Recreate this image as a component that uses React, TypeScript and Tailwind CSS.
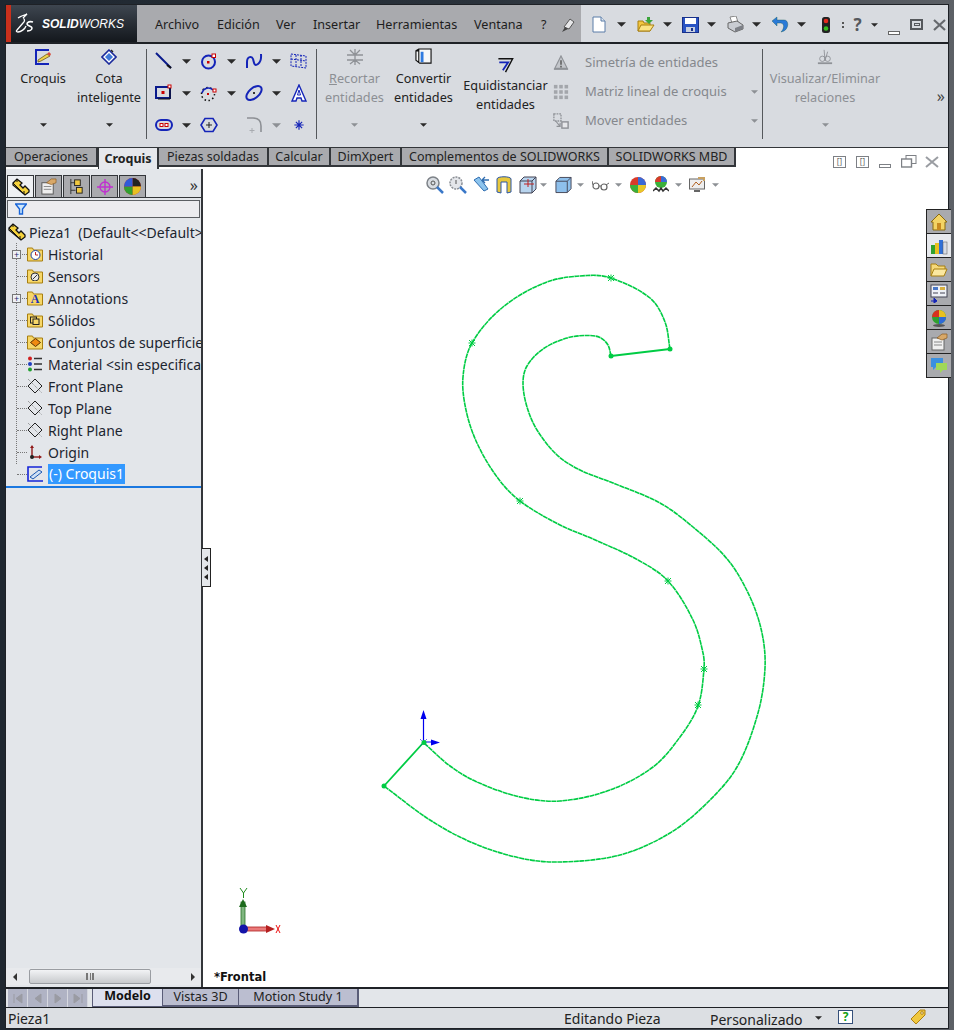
import React from 'react';

type Pt = [number, number];

const GREEN = '#00cc44';

// spline through traced points, handles scaled to each segment so uneven spacing doesn't kink
const smooth = (pts: Pt[]) => {
  const tangent = (i: number): Pt => {
    const a = pts[Math.max(i - 1, 0)];
    const b = pts[Math.min(i + 1, pts.length - 1)];
    const dx = b[0] - a[0];
    const dy = b[1] - a[1];
    const len = Math.hypot(dx, dy) || 1;
    return [dx / len, dy / len];
  };
  let d = `M${pts[0][0]},${pts[0][1]}`;
  for (let i = 0; i < pts.length - 1; i++) {
    const p1 = pts[i];
    const p2 = pts[i + 1];
    const k = Math.hypot(p2[0] - p1[0], p2[1] - p1[1]) / 3;
    const t1 = tangent(i);
    const t2 = tangent(i + 1);
    d += ` C${(p1[0] + t1[0] * k).toFixed(1)},${(p1[1] + t1[1] * k).toFixed(1)} ${(p2[0] - t2[0] * k).toFixed(1)},${(p2[1] - t2[1] * k).toFixed(1)} ${p2[0]},${p2[1]}`;
  }
  return d;
};

const curveOuterTop: Pt[] = [[670, 349], [665, 322], [650, 298], [611, 278], [587, 275.5], [547, 282], [503, 307], [472, 343], [463, 377], [466, 410], [477, 443], [497, 477], [520, 501], [560, 525], [593, 539], [638, 560], [668, 581], [693, 620], [703, 653], [704, 669], [698, 706], [680, 737], [653, 767], [610, 790], [560, 801], [520, 797], [477, 782], [450, 766], [424, 743]];
const curveInnerTop: Pt[] = [[611, 356], [608, 345], [600, 337.5], [587, 335.5], [567, 338], [543, 349], [527, 366], [523, 383], [527, 407], [537, 430], [557, 455], [580, 470], [613, 483], [660, 503], [693, 527], [728, 560], [750, 597], [762, 633], [765, 668], [758, 713], [737, 767], [707, 803], [670, 833], [620, 855], [560, 862], [520, 858], [473, 843], [430, 820], [384, 786]];
const stars: Pt[] = [[611, 278], [472, 343], [520, 501], [668, 581], [704, 669], [698, 705]];

const Caret = ({ dim = false, size = 'big' }: { dim?: boolean; size?: 'big' | 'small' }) => (
  <svg width={size === 'big' ? 9 : 7} height={size === 'big' ? 5 : 4} viewBox="0 0 8 4" className="shrink-0 block">
    <path d="M0 0h8L4 4z" fill={dim ? '#8d9095' : '#2a2a2a'} />
  </svg>
);

const Svg = ({ s = 18, children }: { s?: number; children: React.ReactNode }) => (
  <svg width={s} height={s} viewBox="0 0 18 18" className="shrink-0 block">{children}</svg>
);

// ---------- ribbon icons ----------
const SketchIcon = () => (
  <svg width="18" height="18" viewBox="0 0 18 18">
    <path d="M15 2H2v14h13" fill="none" stroke="#1424b8" strokeWidth="2" />
    <path d="M4 12l9-6 3 2-9 5-3 1z" fill="#f0d24a" stroke="#5a4a10" strokeWidth="0.7" />
    <path d="M13 6l2-2 2 2-1 2z" fill="#d84a3a" />
  </svg>
);
const SmartDim = () => (
  <svg width="16" height="16" viewBox="0 0 16 16">
    <path d="M8 1l7 7-7 7-7-7z" fill="#fff" stroke="#1b2a9c" strokeWidth="1.6" />
    <path d="M4 8l4-4 4 4-4 4z" fill="#3f78d8" />
    <path d="M10 1l2 2" stroke="#222" strokeWidth="1.5" />
  </svg>
);
const LineIcon = () => <Svg><path d="M1 1l15 15" stroke="#0a1a8c" strokeWidth="2" /><path d="M12 13l4 3" stroke="#111" strokeWidth="2" /></Svg>;
const CircleIcon = () => <Svg><circle cx="8.5" cy="10" r="6.5" fill="none" stroke="#1424b8" strokeWidth="2" /><rect x="7" y="9" width="2.5" height="2.5" fill="#c00" /><rect x="12" y="2" width="3.5" height="3.5" fill="#fff" stroke="#c00" /></Svg>;
const SplineIcon = () => <Svg><path d="M2 16V10c0-6 5-6 6-3s1 8 5 5 3-8 3-10" fill="none" stroke="#1424b8" strokeWidth="2" /></Svg>;
const GridIcon = () => <Svg><path d="M1 2l15 2v12L1 14z M1 7l15 2 M6 3v11 M11 3v12" fill="none" stroke="#1424b8" strokeWidth="1" strokeDasharray="2 1" /></Svg>;
const RectIcon = () => <Svg><rect x="1" y="3" width="14" height="11" fill="none" stroke="#0a1a8c" strokeWidth="2" /><rect x="6.5" y="7" width="3" height="3" fill="#c00" /><rect x="13" y="1" width="3" height="3" fill="#fff" stroke="#c00" /><path d="M15 4v11H3" stroke="#111" fill="none" /></Svg>;
const ArcIcon = () => <Svg><circle cx="8" cy="10" r="6.5" fill="none" stroke="#111" strokeWidth="1.5" strokeDasharray="1.5 2.5" /><path d="M2 9a6.5 6.5 0 0 1 11-3" fill="none" stroke="#1424b8" strokeWidth="1.5" /><rect x="13" y="5" width="3" height="3" fill="#fff" stroke="#c00" /><rect x="7" y="9" width="2" height="2" fill="#c00" /></Svg>;
const EllipseIcon = () => <Svg><ellipse cx="9" cy="9" rx="9" ry="5" transform="rotate(-40 9 9)" fill="none" stroke="#1424b8" strokeWidth="2" /><path d="M8 8l2 2M10 8l-2 2" stroke="#333" /></Svg>;
const TextIcon = () => <Svg><path d="M9 1l7 16h-4l-1-3H7l-1 3H2z" fill="#fff" stroke="#1424b8" strokeWidth="1.4" /><path d="M7.5 11L9 6l1.5 5z" fill="none" stroke="#1424b8" /></Svg>;
const SlotIcon = () => <Svg><rect x="1" y="4" width="16" height="10" rx="5" fill="none" stroke="#1424b8" strokeWidth="2" /><rect x="5" y="7.5" width="3" height="3" fill="#fff" stroke="#c00" /><rect x="10" y="7.5" width="3" height="3" fill="#fff" stroke="#c00" /></Svg>;
const PolygonIcon = () => <Svg><path d="M5 2.5h8L17 9l-4 6.5H5L1 9z" fill="none" stroke="#1424b8" strokeWidth="1.6" /><path d="M9 6v6M6 9h6" stroke="#222" /></Svg>;
const FilletIcon = () => <Svg><path d="M2 2h6c5 0 8 3 8 8v6" fill="none" stroke="#8d9095" strokeWidth="1.6" /><path d="M7 12v5M4.5 14.5h5" stroke="#a8abb0" /></Svg>;
const PointIcon = () => <Svg s={14}><path d="M9 3v12M3 9h12M5 5l8 8M13 5l-8 8" stroke="#1424b8" strokeWidth="1.5" /></Svg>;
const TrimIcon = () => (
  <svg width="18" height="18" viewBox="0 0 18 18"><path d="M1 7h16M1 12h16M9 1v16M4 2l5 5 5-5M4 16l5-4 5 4" fill="none" stroke="#8f9297" strokeWidth="1.3" /></svg>
);
const ConvertIcon = () => (
  <svg width="17" height="17" viewBox="0 0 18 18">
    <path d="M1 3l3-2h13v15H5L1 13z M4 1v2 M1 3h3v13" fill="#f6f7f8" stroke="#111" strokeWidth="1.2" />
    <rect x="6" y="4" width="3" height="11" fill="#2f7be0" />
  </svg>
);
const OffsetIcon = () => (
  <svg width="17" height="16" viewBox="0 0 18 18">
    <path d="M1 2h16L9 17" fill="none" stroke="#111" strokeWidth="1.6" />
    <path d="M2 6h10l-6 9" fill="none" stroke="#1424b8" strokeWidth="2" />
  </svg>
);
const MirrorIcon = () => <Svg s={16}><path d="M9 1l7 14H2z" fill="#c3c6cb" stroke="#8f9297" strokeWidth="1.3" /><path d="M9 6v5M9 12v2" stroke="#555" strokeWidth="1.6" /><path d="M1 16h16" stroke="#8f9297" strokeWidth="1.5" /></Svg>;
const PatternIcon = () => (
  <Svg s={16}>
    {[1, 7, 13].flatMap((x) => [1, 7, 13].map((y) => <rect key={`${x}-${y}`} x={x} y={y} width="4" height="4" fill="#a3a6ab" />))}
  </Svg>
);
const MoveIcon = () => <Svg s={16}><path d="M1 1h8v8H1z" fill="none" stroke="#8f9297" strokeWidth="1.5" strokeDasharray="2 1" /><rect x="10" y="10" width="7" height="7" fill="#e6e7ea" stroke="#8f9297" strokeWidth="1.6" /><path d="M3 9l5 6M8 11v4H4" fill="none" stroke="#8f9297" strokeWidth="1.3" /></Svg>;
const RelationIcon = () => <Svg s={16}><path d="M1 16h16" stroke="#8f9297" strokeWidth="2" /><circle cx="6" cy="11" r="3" fill="none" stroke="#8f9297" /><circle cx="12" cy="11" r="3" fill="none" stroke="#8f9297" /><path d="M8 1l1 12M12 3l-3 10" stroke="#8f9297" /></Svg>;

// ---------- quick access ----------
const NewIcon = () => <svg width="14" height="17" viewBox="0 0 14 17" className="block"><path d="M1 1h8l4 4v11H1z" fill="#fff" stroke="#5a7da8" /><path d="M9 1v4h4" fill="#dfe7f0" stroke="#5a7da8" /></svg>;
const OpenIcon = () => <svg width="18" height="17" viewBox="0 0 18 17" className="block"><path d="M1 15V5h5l1 2h6v8z" fill="#f3c63f" stroke="#a77f10" /><path d="M1 15l3-6h13l-4 6z" fill="#fbe383" stroke="#a77f10" /><path d="M10 1h3v3h3l-4 4-4-4h2z" fill="#3ca53c" /></svg>;
const SaveIcon = () => <svg width="17" height="16" viewBox="0 0 17 16" className="block"><rect x="0.5" y="0.5" width="16" height="15" fill="#2a54c4" stroke="#18308a" /><rect x="3" y="1" width="11" height="6" fill="#fff" /><rect x="4" y="10" width="9" height="5" fill="#c8d0e0" /><rect x="9" y="11" width="2" height="3" fill="#18308a" /></svg>;
const PrintIcon = () => <svg width="17" height="17" viewBox="0 0 17 17" className="block"><path d="M3 1l6-1 2 6-6 1z" fill="#fff" stroke="#888" /><path d="M1 7l9-2 6 4v4l-8 3-7-4z" fill="#c9ccd2" stroke="#666" /><path d="M8 12l8-3v4l-8 3z" fill="#7d8087" /></svg>;
const UndoIcon = () => <svg width="18" height="17" viewBox="0 0 18 17" className="block"><path d="M5 4h7c5 0 5 8 0 11l-3 1c3-3 4-8 0-9H5v3L0 5l5-4z" fill="#2a7ad8" stroke="#155" strokeWidth="0.4" /></svg>;
const LightIcon = () => <svg width="8" height="16" viewBox="0 0 8 16" className="block"><rect width="8" height="16" rx="2.5" fill="#222" /><circle cx="4" cy="4" r="2.3" fill="#e42a1c" /><circle cx="4" cy="11.5" r="2.3" fill="#38c020" /></svg>;

// ---------- tree icons ----------
const PartIcon = ({ s = 18 }: { s?: number }) => (
  <svg width={s} height={s} viewBox="0 0 18 18" className="shrink-0">
    <path d="M1 5l4-4 5 4-2 2 3 3 2-2 4 4v2l-4 3L1 7z" fill="#f5d23c" stroke="#111" strokeWidth="1.3" />
    <path d="M1 5l11 11M5 1v3M12 16v-3" fill="none" stroke="#111" strokeWidth="1" />
  </svg>
);
const Folder = ({ children }: { children?: React.ReactNode }) => (
  <span className="relative w-[16px] h-[16px] inline-block shrink-0">
    <svg width="16" height="16" viewBox="0 0 16 16" className="absolute inset-0"><path d="M0.5 15V2h5l1 2h9v11z" fill="#f7d768" stroke="#a77f10" /></svg>
    <span className="absolute inset-0 flex items-center justify-center">{children}</span>
  </span>
);
const PlaneIcon = () => <svg width="16" height="16" viewBox="0 0 16 16"><path d="M8 1l7 7-7 7-7-7z" fill="none" stroke="#222" /><path d="M1 1l14 14" stroke="#666" strokeWidth="0.8" strokeDasharray="1 1" /></svg>;
const MaterialIcon = () => <svg width="16" height="16" viewBox="0 0 16 16"><circle cx="3" cy="2.5" r="2" fill="#d02020" /><circle cx="3" cy="8" r="2" fill="#2040c0" /><circle cx="3" cy="13.5" r="2" fill="#20a030" /><path d="M7 2.5h8M7 8h8M7 13.5h8" stroke="#333" strokeWidth="1.6" /></svg>;
const OriginIcon = () => <svg width="16" height="16" viewBox="0 0 16 16"><path d="M5 13V3" stroke="#901818" strokeWidth="1.4" /><path d="M3 4l2-3 2 3z" fill="#901818" /><path d="M5 13h8" stroke="#901818" strokeWidth="1.4" /><path d="M12 11l3 2-3 2z" fill="#901818" /><circle cx="5" cy="13" r="2" fill="#222" /></svg>;
const SketchTreeIcon = () => <svg width="17" height="16" viewBox="0 0 17 16"><path d="M15 1H1v14h15" fill="none" stroke="#1424d8" strokeWidth="1.6" /><path d="M3 11l9-7 3 2-9 7z" fill="#cfe0f5" stroke="#1c58b0" /></svg>;

const rows: { label: string; plus?: boolean; icon: React.ReactNode }[] = [
  { label: 'Historial', plus: true, icon: <Folder><svg width="11" height="11" viewBox="0 0 11 11"><circle cx="5.5" cy="6" r="4.5" fill="#fff" stroke="#2040a0" /><path d="M5.5 3v3H8" stroke="#c02020" fill="none" /></svg></Folder> },
  { label: 'Sensors', icon: <Folder><svg width="10" height="10" viewBox="0 0 10 10"><circle cx="5" cy="6" r="4" fill="#e8e8e8" stroke="#333" /><path d="M3 8l4-4" stroke="#333" /></svg></Folder> },
  { label: 'Annotations', plus: true, icon: <Folder><span className="font-['Liberation_Serif',serif] text-[12px] font-bold leading-none text-[#1c30b8] pt-[2px]">A</span></Folder> },
  { label: 'Sólidos', icon: <Folder><svg width="10" height="10" viewBox="0 0 10 10"><rect x="0.5" y="2" width="6" height="6" fill="none" stroke="#222" /><rect x="3" y="4" width="6" height="5.5" fill="#f7d768" stroke="#222" /></svg></Folder> },
  { label: 'Conjuntos de superficies', icon: <Folder><svg width="11" height="9" viewBox="0 0 11 9"><path d="M5.5 0.5l5 4-5 4-5-4z" fill="#f08a10" stroke="#5a3000" /></svg></Folder> },
  { label: 'Material <sin especificar>', icon: <MaterialIcon /> },
  { label: 'Front Plane', icon: <PlaneIcon /> },
  { label: 'Top Plane', icon: <PlaneIcon /> },
  { label: 'Right Plane', icon: <PlaneIcon /> },
  { label: 'Origin', icon: <OriginIcon /> },
];

const BigTool = ({ w, icon, lines, dim, caret = true, pt = 'pt-[4px]', iconH = 'h-[17px]', capUnderline }: { w: string; icon: React.ReactNode; lines: string[]; dim?: boolean; caret?: boolean; pt?: string; iconH?: string; capUnderline?: boolean }) => (
  <div className={`${w} ${pt} shrink-0 flex flex-col items-center h-full`}>
    <div className={`${iconH} flex items-center justify-center`}>{icon}</div>
    <div className={`mt-[4px] text-center text-[12.7px] leading-[19px] whitespace-nowrap ${dim ? 'text-[#8c8f94]' : 'text-[#222]'}`}>
      {lines.map((l, i) => (
        <div key={l}>{capUnderline && i === 0 ? <><span className="underline">{l[0]}</span>{l.slice(1)}</> : l}</div>
      ))}
    </div>
    {caret && <div className="mt-auto mb-[20px]"><Caret dim={dim} size="small" /></div>}
  </div>
);

const Sep = () => <div className="w-px h-[90px] bg-[#55585c] shrink-0 self-center -mt-[3px]" />;

const SmallTool = ({ icon, caret, dim }: { icon: React.ReactNode; caret?: boolean; dim?: boolean }) => (
  <div className="h-[32px] flex items-center">
    <span className="w-[24px] flex justify-center">{icon}</span>
    {caret && <span className="ml-[6px]"><Caret dim={dim} /></span>}
  </div>
);

const SideTool = ({ icon, label, caret }: { icon: React.ReactNode; label: string; caret?: boolean }) => (
  <div className="h-[29px] flex items-center text-[#85888d] whitespace-nowrap">
    <span className="w-[16px] flex justify-center mr-[16px]">{icon}</span>
    <span className="flex-1">{label}</span>
    {caret && <Caret dim size="small" />}
  </div>
);

const Tab = ({ w, label, active }: { w: string; label: string; active?: boolean }) => (
  <div className={`${w} shrink-0 flex items-center justify-center whitespace-nowrap border-r-2 border-[#33363a] text-[#222] text-[12.5px] pt-[1px] ${active ? 'bg-[#e6e8ec] font-bold h-[21px] border-l border-b-0' : 'bg-[#a9aaae] h-[19px] border-b-2'}`}>
    {label}
  </div>
);

const PanelTab = ({ active, children }: { active?: boolean; children: React.ReactNode }) => (
  <div className={`w-[27px] h-[22px] flex items-center justify-center border border-[#33363a] border-b-0 ${active ? 'bg-[#eef0f3]' : 'bg-[#a9aaae]'}`}>{children}</div>
);

const TaskBtn = ({ active, children }: { active?: boolean; children: React.ReactNode }) => (
  <div className={`w-[24px] h-[24px] flex items-center justify-center border-b border-[#222] ${active ? 'bg-[#e6e8ec]' : 'bg-[#a9aaae]'}`}>{children}</div>
);

const Viewport = () => (
  <div className="relative flex-1 bg-white">
    {/* heads-up toolbar */}
    <div className="absolute left-[223px] top-[7px] flex items-center h-[17px]">
      <svg width="18" height="18" viewBox="0 0 18 18"><circle cx="7" cy="7" r="6" fill="#d9dde2" stroke="#7d8288" strokeWidth="1.5" /><circle cx="7" cy="7" r="2" fill="none" stroke="#555" /><path d="M11 11l6 6" stroke="#3a78c8" strokeWidth="2.5" /></svg>
      <svg className="ml-[5px]" width="18" height="18" viewBox="0 0 18 18"><circle cx="7" cy="7" r="6" fill="#e4e6ea" stroke="#8a8e94" strokeWidth="1.5" strokeDasharray="2 1" /><path d="M7 4v4" stroke="#555" /><path d="M11 11l6 6" stroke="#3a78c8" strokeWidth="2.5" /></svg>
      <svg className="ml-[5px]" width="18" height="18" viewBox="0 0 18 18"><path d="M2 4l10 11 4-2-9-12z" fill="#8cc4ee" stroke="#2f6db0" /><path d="M10 4h7M10 4l3-3M10 4l3 3" stroke="#2f6db0" fill="none" strokeWidth="1.3" /></svg>
      <svg className="ml-[6px]" width="16" height="18" viewBox="0 0 16 18"><path d="M1 3c0-3 14-3 14 0v13l-4 1V6H5v11l-4-1z" fill="#e8c83c" stroke="#2a56a8" /></svg>
      <svg className="ml-[7px]" width="18" height="18" viewBox="0 0 18 18"><path d="M1 5l4-4h12v12l-4 4H1z" fill="#b8d4ee" stroke="#445" /><path d="M1 5h12v12M13 5l4-4" fill="none" stroke="#445" /><path d="M9 3v8M5 8h10" stroke="#c02020" /></svg>
      <span className="ml-[3px]"><Caret dim size="small" /></span>
      <svg className="ml-[8px]" width="17" height="18" viewBox="0 0 18 18"><path d="M1 5l4-4h12v12l-4 4H1z" fill="#8ec0ec" stroke="#445" /><path d="M1 5h12v12M13 5l4-4" fill="none" stroke="#445" /></svg>
      <span className="ml-[5px]"><Caret dim size="small" /></span>
      <svg className="ml-[8px]" width="17" height="12" viewBox="0 0 17 12"><circle cx="4" cy="7" r="3" fill="none" stroke="#666" strokeWidth="1.2" /><circle cx="12" cy="8" r="3" fill="none" stroke="#666" strokeWidth="1.2" /><path d="M7 7l2 0M1 6L0 2M14 6l3-2" stroke="#666" /></svg>
      <span className="ml-[6px]"><Caret dim size="small" /></span>
      <svg className="ml-[8px]" width="16" height="16" viewBox="0 0 16 16"><circle cx="8" cy="8" r="8" fill="#d83a2a" /><path d="M8 8V0a8 8 0 0 1 8 8z" fill="#3a6ad8" /><path d="M8 8h8a8 8 0 0 1-8 8z" fill="#e8c828" /><path d="M8 8v8a8 8 0 0 1-8-8z" fill="#3ab03a" /></svg>
      <svg className="ml-[7px]" width="16" height="17" viewBox="0 0 16 17"><circle cx="8" cy="6" r="6" fill="#3ab03a" /><path d="M8 6V0a6 6 0 0 1 6 6z" fill="#3a6ad8" /><path d="M8 6H2a6 6 0 0 1 6-6z" fill="#d83a2a" /><path d="M0 15l3-3 3 3 2-3 2 3 3-3 3 3" stroke="#333" strokeWidth="1.5" fill="none" /></svg>
      <span className="ml-[6px]"><Caret dim size="small" /></span>
      <svg className="ml-[7px]" width="16" height="16" viewBox="0 0 16 16"><rect x="0.5" y="2" width="15" height="10" fill="#eee" stroke="#666" /><path d="M3 10l4-5 3 3 3-4" stroke="#b06020" fill="none" /><path d="M5 14h6" stroke="#666" strokeWidth="2" /><path d="M9 1h6v3" stroke="#c8a060" strokeWidth="2" fill="none" /></svg>
      <span className="ml-[7px]"><Caret dim size="small" /></span>
    </div>

    {/* the sketch; viewBox keeps screen coordinates */}
    <svg className="absolute inset-0 w-full h-full" viewBox="204 169 743 818">
      <g fill="none" stroke={GREEN} strokeWidth="1.6" strokeDasharray="5 0.5">
        <path d={smooth(curveOuterTop)} />
        <path d={smooth(curveInnerTop)} />
      </g>
      <path d="M611,356L670,349M384,786L424,742" stroke={GREEN} strokeWidth="1.8" />
      <circle cx="611" cy="356" r="2.5" fill={GREEN} />
      <circle cx="670" cy="349" r="2.5" fill={GREEN} />
      <circle cx="384" cy="786" r="2.5" fill={GREEN} />
      {stars.map(([x, y]) => (
        <path key={`${x}-${y}`} d={`M${x - 3.5},${y}h7M${x},${y - 3.5}v7M${x - 3},${y - 3}l6,6M${x + 3},${y - 3}l-6,6`} stroke={GREEN} strokeWidth="1" />
      ))}
      <path d="M423.5,742V718M424,742h8" stroke="#0000ee" strokeWidth="1.2" />
      <path d="M423.5,710l3,9h-6zM440,742.5l-9,-3v6z" fill="#0000ee" />
      <path d="M420,739l7,7M427,739l-7,7" stroke="#0000ee" strokeWidth="0.8" strokeDasharray="1 1" />
      <circle cx="424" cy="742.5" r="2.5" fill={GREEN} />
      {/* triad */}
      <rect x="241" y="902" width="4" height="27" fill="#7fb67f" stroke="#2a702a" strokeWidth="0.8" />
      <path d="M243,899l4,8h-8z" fill="#1d6b1d" />
      <rect x="244" y="927" width="23" height="4" fill="#ea7a7a" stroke="#b02020" strokeWidth="0.8" />
      <path d="M275,929l-9,-4v8z" fill="#b52020" />
      <circle cx="243.5" cy="929" r="4.5" fill="#1414a8" />
      <path d="M240,888l3.5,5l3.5,-5M243.5,893v5" stroke="#1d8b1d" fill="none" />
      <path d="M276,925l4,8M280,925l-4,8" stroke="#ee1010" fill="none" />
    </svg>

    <div className="absolute left-[11px] bottom-[2px] text-[11.5px] leading-[16px] font-bold text-[#111] font-['DejaVu_Sans',sans-serif]">*Frontal</div>

    {/* task pane */}
    <div className="absolute right-0 top-[40px] border-l border-t border-[#222] translate-x-[3px]">
      <TaskBtn><svg width="18" height="18" viewBox="0 0 18 18"><path d="M1 9l8-8 8 8h-2v8H3V9z" fill="#f3d465" stroke="#8a6a10" /><rect x="7" y="10" width="4" height="7" fill="#c88a20" /></svg></TaskBtn>
      <TaskBtn active><svg width="18" height="18" viewBox="0 0 18 18"><rect x="1" y="8" width="4" height="9" fill="#30a030" /><rect x="5" y="6" width="4" height="11" fill="#e8c020" /><rect x="9" y="3" width="4" height="14" fill="#3070d8" /><rect x="13" y="5" width="4" height="12" fill="#d8dce4" stroke="#555" strokeWidth="0.5" /></svg></TaskBtn>
      <TaskBtn><svg width="18" height="16" viewBox="0 0 18 16"><path d="M1 14V2h5l2 2h7v3" fill="#f5d97a" stroke="#a77f10" /><path d="M1 14l3-7h13l-3 7z" fill="#fbe8a0" stroke="#a77f10" /></svg></TaskBtn>
      <TaskBtn><svg width="18" height="19" viewBox="0 0 18 19"><rect x="1" y="1" width="16" height="12" fill="#eef1f6" stroke="#445" /><rect x="3" y="3" width="5" height="3" fill="#4a78c8" /><rect x="10" y="3" width="5" height="3" fill="#d8b040" /><path d="M3 9h5M10 9h5" stroke="#445" /><path d="M1 17h5M4 14l3 3-3 2z" stroke="#1424b8" fill="#1424b8" /></svg></TaskBtn>
      <TaskBtn><svg width="18" height="18" viewBox="0 0 18 18"><circle cx="9" cy="8" r="7" fill="#30a030" /><path d="M9 8V1a7 7 0 0 1 7 7z" fill="#e8c020" /><path d="M9 8H2a7 7 0 0 1 7-7z" fill="#d83020" /><path d="M9 8h7a7 7 0 0 1-7 7z" fill="#2f6ad8" /><ellipse cx="9" cy="16.5" rx="6" ry="1.5" fill="#555" /></svg></TaskBtn>
      <TaskBtn><svg width="18" height="18" viewBox="0 0 18 18"><rect x="2" y="5" width="12" height="12" fill="#f0f0f0" stroke="#666" /><path d="M4 9h8M4 12h8" stroke="#888" /><path d="M7 5l5-4h5v4l-5 2z" fill="#d8a868" stroke="#8a5a20" strokeWidth="0.7" /></svg></TaskBtn>
      <TaskBtn><svg width="18" height="17" viewBox="0 0 18 17"><rect x="1" y="1" width="12" height="9" fill="#3a90e0" /><path d="M3 10v3l3-3" fill="#3a90e0" /><rect x="6" y="6" width="11" height="7" fill="#a0d858" /><path d="M10 13v3l3-3" fill="#a0d858" /></svg></TaskBtn>
    </div>
  </div>
);

const App: React.FC = () => {
  return (
    <div className="w-[954px] h-[1030px] overflow-hidden bg-gradient-to-r from-[#1f2730] via-[#2a323b] to-[#5c6066] pt-[4px] px-[5px] pb-[1px] font-['Noto_Sans',sans-serif] text-[13px] text-[#222]">
      <div className="h-full flex flex-col border border-[#1e2126] bg-[#d8dbe0]">
        {/* title row */}
        <div className="h-[39px] flex border-b-2 border-[#1e2126] shrink-0">
          <div className="w-[131px] shrink-0 flex items-center bg-gradient-to-b from-[#3e4650] to-[#14181d]">
            <div className="w-[5px] h-full bg-[#c8301c]" />
            <svg className="ml-[4px]" width="20" height="21" viewBox="0 0 20 21">
              <path d="M3 5c3-2 6-3 9-4-2 2-3 3-4 4M8 5c2 1 2 3 0 5l-6 7c-1 1-1 2 1 2 3 0 7-3 8-6" fill="none" stroke="#fff" strokeWidth="1.3" />
              <path d="M18 9c-3-1-6 0-6 2s5 2 5 4-3 3-5 3" fill="none" stroke="#fff" strokeWidth="1.6" />
            </svg>
            <span className="ml-[7px] font-['Liberation_Sans',sans-serif] text-white text-[12px] font-bold italic whitespace-nowrap">SOLID<span className="font-normal">WORKS</span></span>
          </div>
          <div className="w-[444px] shrink-0 bg-[#a9aaae] flex items-center pt-[3px] text-[#1d1d1d] text-[12.6px] whitespace-nowrap">
            <span className="ml-[18px] w-[62px]">Archivo</span>
            <span className="w-[59px]">Edición</span>
            <span className="w-[37px]">Ver</span>
            <span className="w-[63px]">Insertar</span>
            <span className="w-[98px]">Herramientas</span>
            <span className="w-[67px]">Ventana</span>
            <span className="w-[20px]">?</span>
            <svg width="14" height="15" viewBox="0 0 14 15"><path d="M3 9l6-8 4 3-5 7z" fill="#e8e8ea" stroke="#555" /><path d="M1 14l3-5 3 2z" fill="#444" /></svg>
          </div>
          <div className="flex-1 flex items-center pt-[2px] bg-[#d8dbe0]">
            <span className="ml-[11px]"><NewIcon /></span>
            <span className="ml-[11px]"><Caret /></span>
            <span className="ml-[11px]"><OpenIcon /></span>
            <span className="ml-[8px]"><Caret /></span>
            <span className="ml-[10px]"><SaveIcon /></span>
            <span className="ml-[8px]"><Caret /></span>
            <span className="ml-[11px]"><PrintIcon /></span>
            <span className="ml-[8px]"><Caret /></span>
            <span className="ml-[11px]"><UndoIcon /></span>
            <span className="ml-[7px]"><Caret /></span>
            <span className="ml-[16px]"><LightIcon /></span>
            <span className="ml-[12px] w-[3px] h-[6px] border-l-2 border-dotted border-[#555]" />
            <span className="ml-[7px] w-[11px] text-[17px] leading-none font-bold text-[#55585d] text-center">?</span>
            <span className="ml-[8px]"><Caret size="small" /></span>
            <span className="ml-[10px] self-end mb-[7px] w-[12px] h-[4px] border border-[#666] bg-white" />
            <span className="ml-[10px] w-[13px] h-[11px] border-2 border-[#55585c] flex items-center justify-center"><span className="w-[6px] h-[3px] border border-[#55585c]" /></span>
            <svg className="ml-[10px]" width="13" height="12" viewBox="0 0 13 12"><path d="M1 1l11 10M12 1L1 11" stroke="#65686d" strokeWidth="2.2" /></svg>
          </div>
        </div>

        {/* ribbon */}
        <div className="h-[104px] flex shrink-0 border-b border-[#33363a] pl-[4px]">
          <BigTool w="w-[66px]" icon={<SketchIcon />} lines={['Croquis']} />
          <BigTool w="w-[66px]" icon={<SmartDim />} lines={['Cota', 'inteligente']} />
          <div className="w-[4px] shrink-0" />
          <Sep />
          <div className="w-[169px] pl-[5px] pr-[5px] pt-[1px] grid grid-cols-[45px_45px_45px_24px] content-start shrink-0">
            <SmallTool icon={<LineIcon />} caret />
            <SmallTool icon={<CircleIcon />} caret />
            <SmallTool icon={<SplineIcon />} caret />
            <SmallTool icon={<GridIcon />} />
            <SmallTool icon={<RectIcon />} caret />
            <SmallTool icon={<ArcIcon />} caret />
            <SmallTool icon={<EllipseIcon />} caret />
            <SmallTool icon={<TextIcon />} />
            <SmallTool icon={<SlotIcon />} caret />
            <SmallTool icon={<PolygonIcon />} />
            <SmallTool icon={<FilletIcon />} caret dim />
            <SmallTool icon={<PointIcon />} />
          </div>
          <Sep />
          <div className="w-[3px] shrink-0" />
          <BigTool w="w-[69px]" icon={<TrimIcon />} lines={['Recortar', 'entidades']} dim capUnderline />
          <BigTool w="w-[69px]" icon={<ConvertIcon />} lines={['Convertir', 'entidades']} />
          <BigTool w="w-[95px]" icon={<OffsetIcon />} lines={['Equidistanciar', 'entidades']} caret={false} pt="pt-[13px]" iconH="h-[15px]" />
          <div className="w-[209px] pt-[4px] shrink-0 pr-[4px]">
            <SideTool icon={<MirrorIcon />} label="Simetría de entidades" />
            <SideTool icon={<PatternIcon />} label="Matriz lineal de croquis" caret />
            <SideTool icon={<MoveIcon />} label="Mover entidades" caret />
          </div>
          <Sep />
          <BigTool w="w-[124px]" icon={<RelationIcon />} lines={['Visualizar/Eliminar', 'relaciones']} dim />
          <div className="flex-1 flex items-center justify-end pr-[3px] pt-[1px] text-[#444] text-[16px]">»</div>
        </div>

        {/* command tabs */}
        <div className="h-[21px] flex bg-white shrink-0 items-start">
          <Tab w="w-[92px]" label="Operaciones" />
          <Tab w="w-[61px]" label="Croquis" active />
          <Tab w="w-[110px]" label="Piezas soldadas" />
          <Tab w="w-[62px]" label="Calcular" />
          <Tab w="w-[71px]" label="DimXpert" />
          <Tab w="w-[207px]" label="Complementos de SOLIDWORKS" />
          <Tab w="w-[127px]" label="SOLIDWORKS MBD" />
          <div className="flex-1 flex items-center h-full pt-[6px] pl-[97px]">
            <span className="w-[13px] h-[12px] border border-[#7d8085] flex items-center justify-center text-[8px] leading-none text-[#666]">[]</span>
            <span className="ml-[10px] w-[13px] h-[12px] border border-[#7d8085] flex items-center justify-center text-[8px] leading-none text-[#666]">[]</span>
            <span className="ml-[10px] self-end mb-[1px] w-[12px] h-[4px] border border-[#7d8085]" />
            <svg className="ml-[10px]" width="16" height="13" viewBox="0 0 16 13"><rect x="5" y="0.5" width="10" height="8" fill="#fff" stroke="#7d8085" /><rect x="0.5" y="4" width="10" height="8" fill="#fff" stroke="#7d8085" strokeWidth="1.4" /></svg>
            <svg className="ml-[8px]" width="14" height="12" viewBox="0 0 14 12"><path d="M1 1l12 10M13 1L1 11" stroke="#9a9da2" strokeWidth="2" /></svg>
          </div>
        </div>

        {/* body */}
        <div className="flex-1 flex min-h-0 bg-white">
          <div className="relative z-10 w-[197px] shrink-0 flex flex-col bg-[#e3e6ea] border-r-2 border-[#33363a]">
            <div className="h-[29px] flex items-end gap-[1px] pl-[1px] bg-[#e3e6ea] border-b border-[#33363a] shrink-0">
              <PanelTab active><PartIcon /></PanelTab>
              <PanelTab><svg width="17" height="17" viewBox="0 0 18 18"><rect x="2" y="5" width="12" height="12" fill="#eee" stroke="#555" /><path d="M4 9h8M4 12h8" stroke="#888" /><path d="M7 5l5-4h5v4l-5 2z" fill="#d8a868" stroke="#8a5a20" strokeWidth="0.7" /></svg></PanelTab>
              <PanelTab><svg width="17" height="17" viewBox="0 0 18 18"><path d="M3 1v16M3 5h5M3 13h5" stroke="#333" fill="none" /><rect x="7" y="2" width="6" height="6" fill="#f0c840" stroke="#222" /><rect x="9" y="10" width="6" height="6" fill="#f0c840" stroke="#222" /></svg></PanelTab>
              <PanelTab><svg width="16" height="16" viewBox="0 0 16 16"><circle cx="8" cy="8" r="5" fill="none" stroke="#c030d0" strokeWidth="1.4" /><path d="M8 0v16M0 8h16" stroke="#c030d0" strokeWidth="1.4" /></svg></PanelTab>
              <PanelTab><svg width="17" height="17" viewBox="0 0 16 16"><circle cx="8" cy="8" r="8" fill="#d83020" /><path d="M8 8V0a8 8 0 0 1 8 8z" fill="#222" /><path d="M8 8h8a8 8 0 0 1-8 8z" fill="#e8c020" /><path d="M8 8v8a8 8 0 0 1-8-8z" fill="#30a030" /><path d="M8 8H0a8 8 0 0 1 8-8z" fill="#2f5ad8" /></svg></PanelTab>
              <div className="flex-1 self-center text-right pr-[3px] text-[16px] leading-none text-[#333] pt-[3px]">»</div>
            </div>
            <div className="mx-[1px] mt-[2px] h-[18px] bg-[#ececef] border border-[#5c5f63] flex items-center pl-[7px] shrink-0">
              <svg width="12" height="12" viewBox="0 0 12 12"><path d="M0.5 1h11L7.5 6v5h-3V6z" fill="#cfe7fb" stroke="#1864d8" strokeWidth="1.4" /></svg>
            </div>

            <div className="relative mt-[3px] overflow-hidden whitespace-nowrap text-[14px] text-[#1c2530]">
              <div className="h-[22px] flex items-center pl-[2px] gap-[3px]"><PartIcon /><span>Pieza1<span className="ml-[7px]">(Default&lt;&lt;Default&gt;_Estado de visualización 1&gt;)</span></span></div>
              <div className="absolute left-[10px] top-[22px] h-[221px] border-l border-dotted border-[#777]" />
              {rows.map((r) => (
                <div key={r.label} className="relative h-[22px] flex items-center pl-[21px]">
                  <span className="absolute left-[11px] top-[11px] w-[10px] border-t border-dotted border-[#777]" />
                  {r.plus && <span className="absolute left-[6px] top-[7px] w-[9px] h-[9px] border border-[#777] bg-[#eef0f3] flex items-center justify-center"><span className="text-[9px] leading-none text-[#1c2a70]">+</span></span>}
                  <span className="w-[21px] shrink-0 flex">{r.icon}</span>
                  <span>{r.label}</span>
                </div>
              ))}
              <div className="relative h-[22px] flex items-center pl-[21px]">
                <span className="absolute left-[11px] top-[11px] w-[10px] border-t border-dotted border-[#777]" />
                <span className="w-[21px] shrink-0 flex"><SketchTreeIcon /></span>
                <span className="bg-[#3399ff] text-white px-[1px] h-[20px] leading-[19px]">(-) Croquis1</span>
              </div>
            </div>
            <div className="h-[2px] mt-[1px] bg-[#1b78e0] shrink-0" />

            {/* collapse handle */}
            <div className="absolute right-[-10px] top-[379px] w-[9px] h-[39px] bg-[#e3e6ea] border-y border-r border-[#222] flex flex-col items-center justify-center gap-[3px]">
              <span className="w-0 h-0 border-y-[3px] border-y-transparent border-r-[4px] border-r-[#222]" />
              <span className="w-0 h-0 border-y-[3px] border-y-transparent border-r-[4px] border-r-[#222]" />
              <span className="w-0 h-0 border-y-[3px] border-y-transparent border-r-[4px] border-r-[#222]" />
            </div>

            {/* scrollbar */}
            <div className="mt-auto h-[17px] mb-[2px] flex items-center bg-[#e8eaed] shrink-0">
              <span className="w-[17px] flex justify-center"><span className="w-0 h-0 border-y-[4px] border-y-transparent border-r-[4px] border-r-[#333]" /></span>
              <div className="ml-[6px] w-[122px] h-[15px] rounded-[2px] border border-[#9a9da2] bg-gradient-to-b from-[#f2f3f5] to-[#c8cacd] flex items-center justify-center">
                <span className="w-[8px] h-[7px] border-x-2 border-[#777] flex justify-center"><span className="w-[1px] h-full bg-[#777]" /></span>
              </div>
              <span className="ml-auto w-[17px] flex justify-center"><span className="w-0 h-0 border-y-[4px] border-y-transparent border-l-[4px] border-l-[#333]" /></span>
            </div>
          </div>
          <Viewport />
        </div>

        {/* model tabs */}
        <div className="h-[20px] flex items-start shrink-0 bg-[#e3e6ea] border-t-2 border-[#1e2126] pl-[2px] text-[12.6px]">
          <div className="w-[80px] h-[18px] flex bg-[#b0b3c4] shrink-0">
            {['M4 3v9M12 3L6 7.5l6 4.5z', 'M11 3L5 7.5l6 4.5z', 'M5 3l6 4.5L5 12z', 'M12 3v9M4 3l6 4.5L4 12z'].map((d) => (
              <span key={d} className="w-[20px] h-full flex items-center justify-center border-r border-[#d6d8e0]">
                <svg width="15" height="15" viewBox="0 0 15 15"><path d={d} fill="#9a9ba3" stroke="#9a9ba3" /></svg>
              </span>
            ))}
          </div>
          <div className="ml-[4px] w-[71px] h-[19px] pb-[2px] bg-[#dde0ee] font-bold text-[12.5px] flex items-center justify-center border-x border-b-2 border-[#5a5d78] text-[#111]">Modelo</div>
          <div className="w-[76px] h-[18px] bg-[#bbbed0] flex items-center justify-center border-b-2 border-r border-[#5a5d78]">Vistas 3D</div>
          <div className="w-[120px] h-[18px] bg-[#bbbed0] flex items-center justify-center border-b-2 border-r-2 border-[#5a5d78]">Motion Study 1</div>
        </div>

        {/* status bar */}
        <div className="h-[21px] shrink-0 flex items-center border-t border-[#1e2126] bg-[#dcdfe3] text-[14px] whitespace-nowrap">
          <span className="ml-[2px] w-[556px]">Pieza1</span>
          <span className="w-[146px]">Editando Pieza</span>
          <span className="w-[105px] mt-[2px]">Personalizado</span>
          <span className="w-[23px]"><Caret size="small" /></span>
          <span className="w-[15px] h-[14px] bg-white border border-[#35507a] text-[#12a012] text-[12px] font-bold leading-[12px] text-center -mt-[2px]">?</span>
          <svg className="ml-[57px] -mt-[3px]" width="16" height="16" viewBox="0 0 16 16"><path d="M1 10l9-9h5v5l-9 9z" fill="#f0c840" stroke="#b08010" /><circle cx="12" cy="4" r="1.3" fill="#fff" stroke="#b08010" /></svg>
        </div>
      </div>
    </div>
  );
};

export default App;
